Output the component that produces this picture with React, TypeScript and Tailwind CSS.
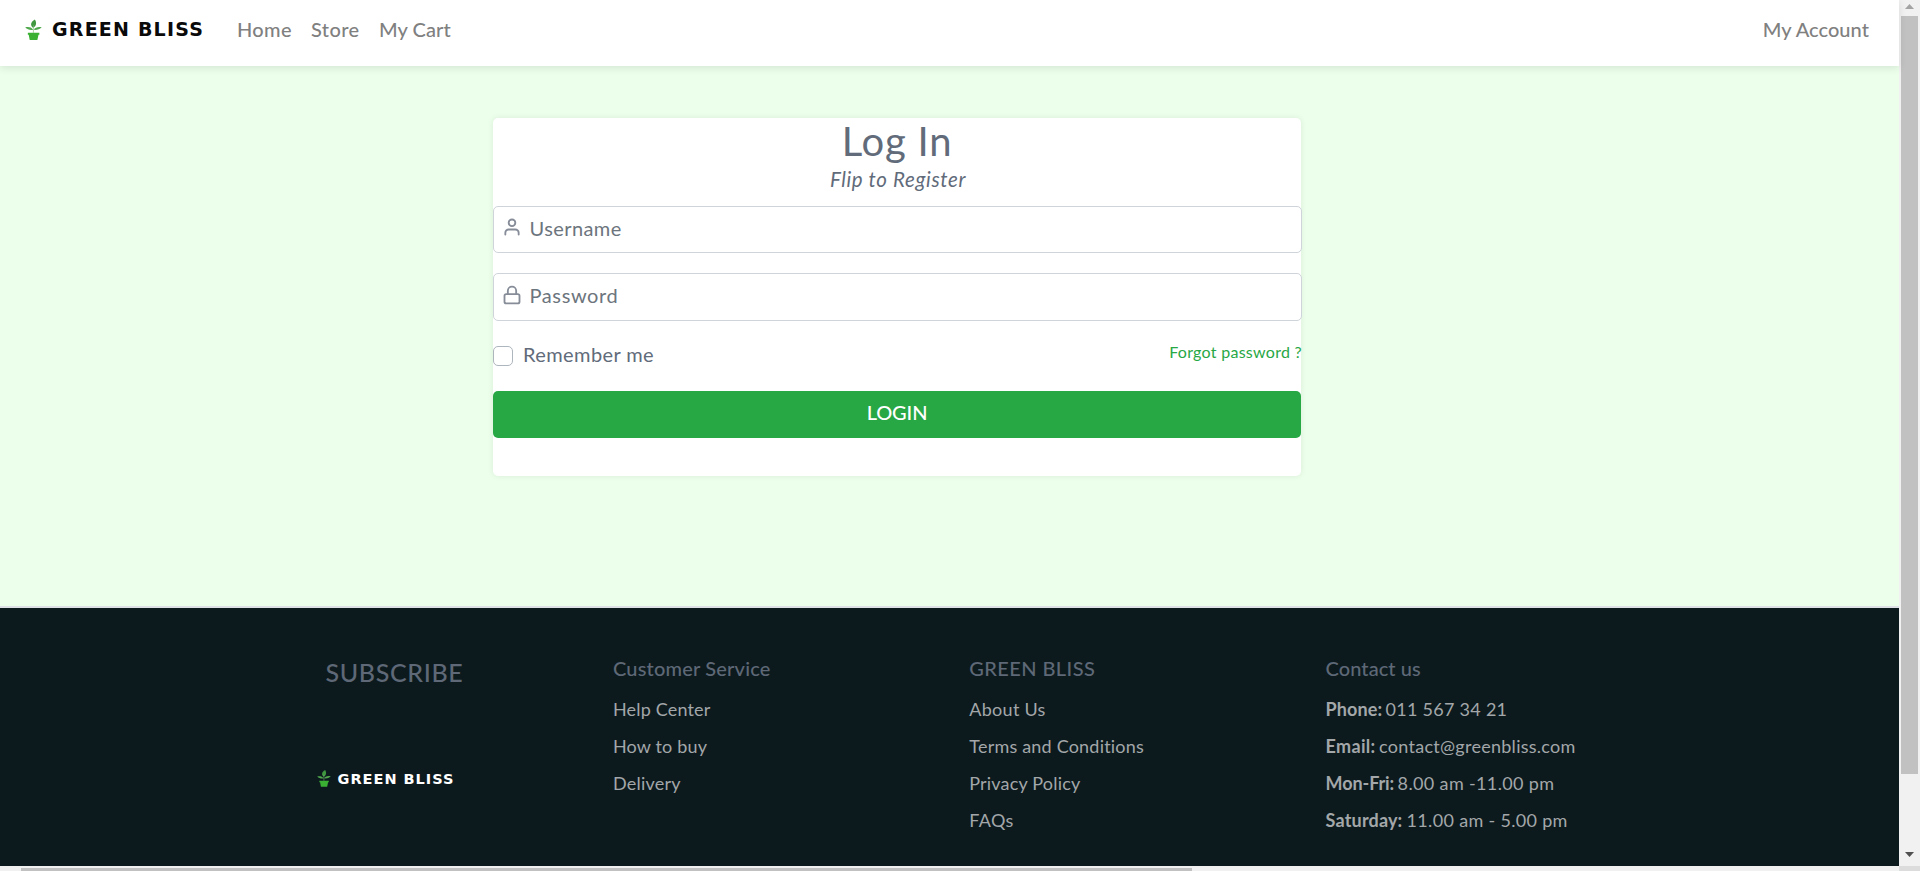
import React from 'react';

function Plant({ className }: { className: string }) {
  return (
    <svg viewBox="0 0 18 22" className={className} fill="none">
      <path d="M8.600 8.600C5.400 7 5.600 2.400 10.500 0c2 3.300 1.600 7-1.900 8.600Z" fill="#3f973f" />
      <path d="M8.700 10.800C6.500 7.800 3.300 7.500 .2 8.400c2.400 2.300 5.500 3.100 8.500 2.400Z" fill="#4fa94c" />
      <path d="M9.100 10.800c2-2.900 4.900-3.600 8.600-2.700-2.500 2.400-5.500 3.200-8.600 2.700Z" fill="#4fa94c" />
      <path d="M8.900 6v8" stroke="#7fb87c" strokeWidth=".7" />
      <path d="M3 13.800h12.200v2.100h-.9L13.100 21.600H5L3.900 15.900H3Z" fill="#3bb134" />
    </svg>
  );
}

function UserIcon() {
  return (
    <svg viewBox="0 0 24 24" className="size-5 shrink-0" fill="none" stroke="#868d98" strokeWidth="2.2" strokeLinecap="round" strokeLinejoin="round">
      <path d="M20 21v-2a4 4 0 0 0-4-4H8a4 4 0 0 0-4 4v2" />
      <circle cx="12" cy="7" r="4" />
    </svg>
  );
}

function LockIcon() {
  return (
    <svg viewBox="0 0 24 24" className="size-5 shrink-0" fill="none" stroke="#868d98" strokeWidth="2.2" strokeLinecap="round" strokeLinejoin="round">
      <rect x="3" y="11" width="18" height="11" rx="2" />
      <path d="M7 11V7a5 5 0 0 1 10 0v4" />
    </svg>
  );
}

type Line = { label?: string; labelClass?: string; text: string; className: string };

const columns: { title: string; titleClass: string; lines: Line[] }[] = [
  {
    title: 'Customer Service',
    titleClass: 'tracking-[0.18px]',
    lines: [
      { text: 'Help Center', className: 'tracking-[0.16px]' },
      { text: 'How to buy', className: 'tracking-[0.16px]' },
      { text: 'Delivery', className: 'tracking-[0.2px]' },
    ],
  },
  {
    title: 'GREEN BLISS',
    titleClass: 'tracking-[0.42px]',
    lines: [
      { text: 'About Us', className: 'tracking-[0.28px]' },
      { text: 'Terms and Conditions', className: 'tracking-[0.2px]' },
      { text: 'Privacy Policy', className: 'tracking-[0.18px]' },
      { text: 'FAQs', className: 'tracking-[0.3px]' },
    ],
  },
  {
    title: 'Contact us',
    titleClass: 'tracking-[0.07px]',
    lines: [
      { label: 'Phone:', labelClass: 'w-[60px] tracking-[0.13px]', text: '011 567 34 21', className: 'tracking-[0.27px]' },
      { label: 'Email:', labelClass: 'w-[53.5px] tracking-[0.32px]', text: 'contact@greenbliss.com', className: 'tracking-[0.27px]' },
      { label: 'Mon-Fri:', labelClass: 'w-[72px] tracking-[-0.1px]', text: '8.00 am -11.00 pm', className: 'tracking-[0.36px]' },
      { label: 'Saturday:', labelClass: 'w-[81px] tracking-[0.17px]', text: '11.00 am - 5.00 pm', className: 'tracking-[0.32px]' },
    ],
  },
];

export default function App() {
  return (
    <div className="flex h-[871px] w-[1920px] overflow-hidden bg-[#ebffeb] font-['Lato','Open_Sans',sans-serif] text-[20px] leading-[30px] text-[#616b7a]">
      <div className="flex w-[1899px] flex-col">
        <nav className="relative z-10 flex h-[66px] items-start bg-white pt-[14px] pr-[30px] pl-[25px] font-medium text-[#808080] shadow-[0_2px_8px_rgba(0,0,0,0.1)]">
          <a className="flex w-[212px] items-start">
            <Plant className="mt-[5px] h-[22px] w-[17px]" />
            <span className="ml-[10px] font-['DejaVu_Sans',sans-serif] text-[19px] font-bold leading-[30px] tracking-[1.2px] whitespace-nowrap text-[#0a0a0a]">GREEN BLISS</span>
          </a>
          <a className="w-[74px] tracking-[0.36px]">Home</a>
          <a className="w-[68px] tracking-[0.39px]">Store</a>
          <a className="tracking-[0.08px]">My Cart</a>
          <a className="ml-auto tracking-[0.05px]">My Account</a>
        </nav>

        <main className="flex h-[540px] flex-col pt-[52px] pl-[493px]">
          <section className="flex h-[358px] w-[808px] flex-col rounded-[5px] bg-white shadow-[0_0_6px_rgba(0,0,0,0.08)]">
            <h1 className="pt-[2px] text-center text-[40px] leading-[43px] tracking-[0.8px]">Log In</h1>
            <p className="mt-px pl-[2px] text-center text-[20.5px] italic leading-[30px] tracking-[0.65px]">Flip to Register</p>
            <div className="mt-3 flex h-[47px] w-[809px] items-start rounded-[5px] border border-[#ced4da] bg-white pt-[10px] pl-[8px] text-[#6c757d]">
              <UserIcon />
              <span className="ml-[7.5px] mt-[-4px] tracking-[0.42px]">Username</span>
            </div>
            <div className="mt-5 flex h-12 w-[809px] items-start rounded-[5px] border border-[#ced4da] bg-white pt-[11px] pl-[8px] text-[#6c757d]">
              <LockIcon />
              <span className="ml-[7.5px] mt-[-5px] tracking-[0.62px]">Password</span>
            </div>
            <div className="mt-[18px] flex h-[52px] w-[809px] items-start">
              <span className="mt-[7px] size-5 rounded-[5px] border border-[#adb5bd] bg-white" />
              <span className="ml-[10px] tracking-[0.4px]">Remember me</span>
              <a className="ml-auto text-[16px] leading-[26px] tracking-[0.28px] text-[#28a745]">Forgot password ?</a>
            </div>
            <button className="h-[47px] w-full rounded-[5px] bg-[#28a745] pb-[4px] text-center font-medium leading-[43px] tracking-[-0.12px] text-white">LOGIN</button>
          </section>
        </main>

        <footer className="flex h-[260px] border-t-2 border-[#dee2e6] bg-[#0c1a1e] pl-[317px]">
          <div className="w-[296px] pt-[48px]">
            <h2 className="pl-[8.5px] text-[25px] font-medium leading-[32px] tracking-[0.65px] text-[#5e6876]">SUBSCRIBE</h2>
            <a className="mt-[82px] flex items-start">
              <Plant className="h-[17px] w-[14px]" />
              <span className="ml-[6.5px] mt-[-3px] font-['DejaVu_Sans',sans-serif] text-[14.5px] font-bold leading-[24px] tracking-[1px] whitespace-nowrap text-white">GREEN BLISS</span>
            </a>
          </div>
          {columns.map((column) => (
            <div key={column.title} className="w-[356.3px] pt-[45px]">
              <h3 className={`font-medium leading-[30px] text-[#5e6876] ${column.titleClass}`}>{column.title}</h3>
              <ul className="mt-[8px] text-[18px] leading-[37px] text-[#a3a7a9]">
                {column.lines.map((line) => (
                  <li key={line.text} className="flex whitespace-nowrap">
                    {line.label && <b className={`font-bold ${line.labelClass}`}>{line.label}</b>}
                    <span className={line.className}>{line.text}</span>
                  </li>
                ))}
              </ul>
            </div>
          ))}
        </footer>

        <div className="flex h-[5px] flex-col bg-[#f1f1f1] pt-[2px] pl-[21px]">
          <div className="h-[3px] w-[1171px] bg-[#c1c1c1]" />
        </div>
      </div>

      <div className="flex w-[21px] flex-col">
        <div className="flex h-[866px] flex-col items-center bg-[#f1f1f1]">
          <svg viewBox="0 0 9 5" className="mt-1 h-[5px] w-[9px]" fill="#a3a3a3"><path d="M0 5 4.500 0 9 5Z" /></svg>
          <div className="mt-[7px] h-[758px] w-[17px] bg-[#c1c1c1]" />
          <svg viewBox="0 0 9 5" className="mt-[78px] h-[5px] w-[9px]" fill="#505050"><path d="M0 0 4.500 5 9 0Z" /></svg>
        </div>
        <div className="h-[5px] bg-[#dcdcdc]" />
      </div>
    </div>
  );
}
